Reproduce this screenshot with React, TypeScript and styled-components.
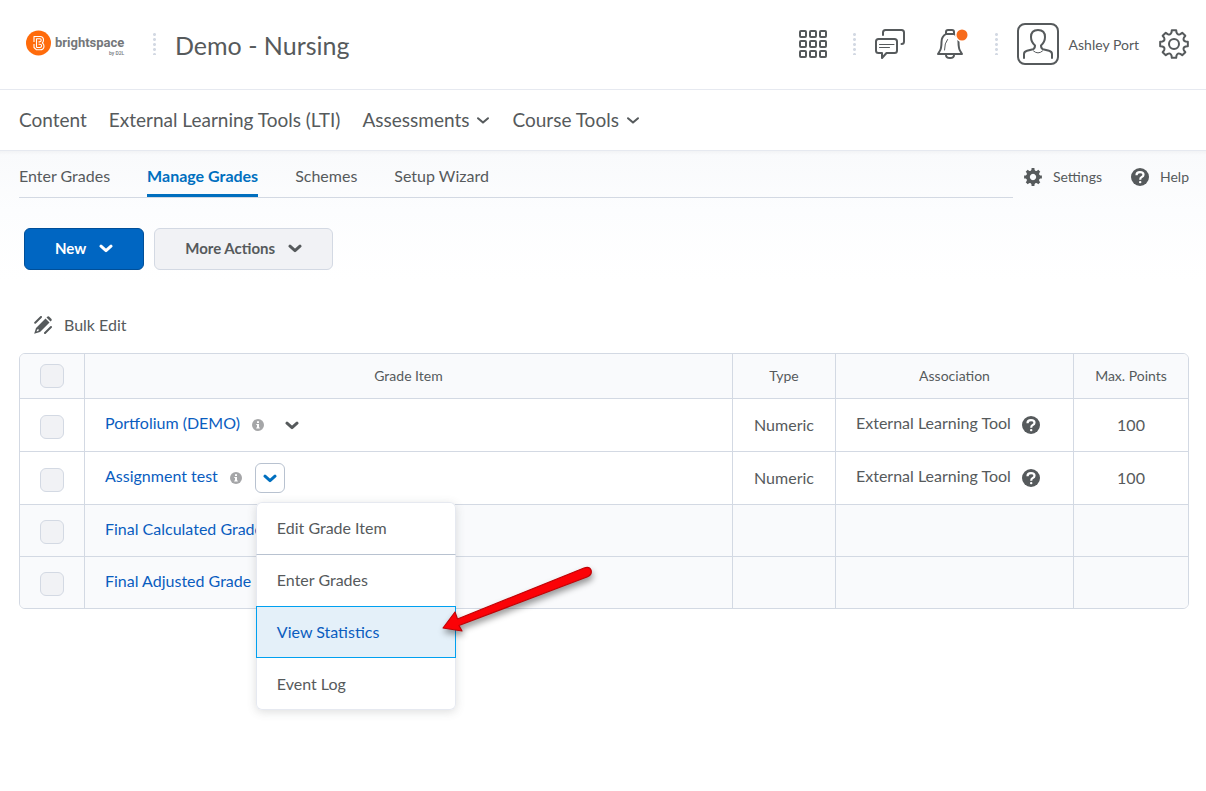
import React from "react";
import styled, { createGlobalStyle } from "styled-components";

const ink = "#565a5c";
const blue = "#006fbf";
const link = "#0a5dbf";
const line = "#d3d9e3";

const GlobalStyle = createGlobalStyle`
  *, *::before, *::after { box-sizing: border-box; }
  body {
    margin: 0;
    background: #fff;
    color: ${ink};
    font-family: Lato, "Liberation Sans", sans-serif;
    font-size: 16px;
    line-height: 20px;
  }
  button { font: inherit; color: inherit; cursor: pointer; }
  a { color: inherit; text-decoration: none; }
  svg { display: block; flex: none; }
`;

const Page = styled.div`
  min-height: 100vh;
`;
const Header = styled.header`
  display: flex;
  align-items: center;
  height: 90px;
  padding: 0 17px 2px 26px;
  border-bottom: 1px solid #e6e9f0;
`;
const Logo = styled.a`
  display: flex;
  margin-right: 25px;
`;
const Dots = styled.span`
  width: 3px;
  height: 23px;
  flex: none;
  background: radial-gradient(circle, #d3d9e3 1px, transparent 2px) 0 0 / 3px 5px;
`;
const CourseTitle = styled.h1`
  margin: 0 auto 0 19px;
  padding-top: 2px;
  font-size: 25px;
  line-height: 32px;
  font-weight: 400;
  white-space: nowrap;
`;
const HeaderTools = styled.div`
  display: flex;
  align-items: center;
`;
const ToolGroup = styled.div<{ $gap: number }>`
  display: flex;
  align-items: center;
  gap: ${(p) => p.$gap}px;
  margin: 0 26px 0 0;
  ${Dots} + & { margin-left: 19px; }
`;
const IconButton = styled.button`
  display: flex;
  padding: 0;
  border: 0;
  background: none;
`;
const Profile = styled.button`
  display: flex;
  align-items: center;
  gap: 10px;
  margin: 0 20px 0 19px;
  padding: 0;
  border: 0;
  background: none;
  font-size: 14px;
  white-space: nowrap;
`;
const ProfileName = styled.span`
  padding-top: 2px;
`;
const Avatar = styled.span`
  display: flex;
  justify-content: center;
  align-items: center;
  width: 42px;
  height: 42px;
  border: 2px solid ${ink};
  border-radius: 8px;
`;
const NavBar = styled.nav`
  display: flex;
  align-items: center;
  gap: 22px;
  height: 60px;
  padding: 0 19px;
  font-size: 19px;
  line-height: 24px;
`;
const NavItem = styled.a`
  display: flex;
  align-items: center;
  gap: 7px;
  white-space: nowrap;
`;
const Main = styled.main`
  padding: 0 17px 80px 19px;
  border-top: 1px solid #e6e9f0;
  background: linear-gradient(#f2f3f5 0, #f9fafc 4px, #fcfdfe 60px, #fff 130px);
`;
const TabRow = styled.div`
  display: flex;
  justify-content: space-between;
  gap: 11px;
`;
const Tabs = styled.nav`
  display: flex;
  flex: 1;
  gap: 37px;
  height: 47px;
  border-bottom: 1px solid ${line};
`;
const Tab = styled.a<{ $active?: boolean }>`
  display: block;
  height: 46px;
  padding-top: 15px;
  white-space: nowrap;
  border-bottom: 3px solid ${(p) => (p.$active ? blue : "transparent")};
  color: ${(p) => (p.$active ? blue : ink)};
  font-weight: ${(p) => (p.$active ? 700 : 400)};
`;
const Utilities = styled.div`
  display: flex;
  align-items: flex-start;
  gap: 29px;
  padding-top: 16px;
`;
const Utility = styled.a`
  display: flex;
  align-items: center;
  gap: 11px;
  font-size: 14px;
`;
const Actions = styled.div`
  display: flex;
  gap: 10px;
  padding: 30px 5px 0;
`;
const ActionButton = styled.button<{ $primary?: boolean }>`
  display: flex;
  align-items: center;
  gap: 13px;
  height: 42px;
  padding: 0 30px 2px;
  border: 1px solid ${(p) => (p.$primary ? "#004f99" : line)};
  border-radius: 6px;
  background: ${(p) => (p.$primary ? "#0066c2" : "#f1f2f5")};
  color: ${(p) => (p.$primary ? "#fff" : ink)};
  font-size: 15px;
  font-weight: 700;
`;
const BulkEdit = styled.button`
  display: flex;
  align-items: center;
  gap: 12px;
  margin: 45px 0 18px 15px;
  padding: 0;
  border: 0;
  background: none;
`;
const GradeTable = styled.table`
  width: 100%;
  table-layout: fixed;
  border-collapse: separate;
  border-spacing: 0;
  border: 1px solid ${line};
  border-radius: 6px;
`;
const Row = styled.tr<{ $tall?: boolean; $tint?: boolean }>`
  height: ${(p) => (p.$tall ? 53 : 52)}px;
  background: ${(p) => (p.$tint ? "#f9fafc" : "#fff")};
`;
const HeadRow = styled(Row)`
  height: 44px;
`;
const Check = styled.input`
  appearance: none;
  display: block;
  width: 24px;
  height: 24px;
  margin: 0 auto;
  border: 1px solid ${line};
  border-radius: 6px;
  background: #f1f2f5;
`;
const Cell = styled.td<{ $left?: boolean }>`
  padding: 0 ${(p) => (p.$left ? 20 : 0)}px;
  text-align: ${(p) => (p.$left ? "left" : "center")};
  border-left: 1px solid ${line};
  border-top: 1px solid ${line};
  vertical-align: middle;
  &:first-child { border-left: 0; }
  tr:last-child &:first-child { border-bottom-left-radius: 5px; }
  tr:last-child &:last-child { border-bottom-right-radius: 5px; }
  ${Check} { margin-top: 3px; }
`;
const HeadCell = styled.th`
  padding: 0;
  font-size: 14px;
  font-weight: 400;
  border-left: 1px solid ${line};
  &:first-child { border-left: 0; border-top-left-radius: 5px; }
  &:last-child { border-top-right-radius: 5px; }
`;
const Line = styled.div`
  display: flex;
  align-items: center;
  white-space: nowrap;
`;
const ItemLink = styled.a`
  color: ${link};
  margin: 0 12px 4px 0;
`;
const Association = styled.span`
  margin: 0 11px 4px 0;
`;
const MenuAnchor = styled.div`
  position: relative;
  margin-left: 13px;
`;
const MenuToggle = styled.button<{ $open?: boolean }>`
  display: flex;
  align-items: center;
  justify-content: center;
  width: 30px;
  height: 30px;
  padding: 0;
  border: 1px solid ${(p) => (p.$open ? "#b8c2d0" : "transparent")};
  border-radius: 6px;
  background: none;
  color: ${(p) => (p.$open ? blue : ink)};
`;
const Menu = styled.div`
  position: absolute;
  z-index: 1;
  top: 39px;
  left: 1px;
  width: 200px;
  border-radius: 6px;
  background: #fff;
  box-shadow: inset 0 0 0 1px #e6e9f0, 0 2px 10px rgba(86, 90, 92, 0.2);
`;
const MenuItem = styled.button<{ $active?: boolean; $ruled?: boolean }>`
  display: block;
  width: 100%;
  height: 52px;
  padding: 0 20px;
  text-align: left;
  border: 1px solid ${(p) => (p.$active ? "#00a0f0" : "transparent")};
  ${(p) => (p.$ruled ? "border-top-color: #b8c2d0;" : "")}
  background: ${(p) => (p.$active ? "#e4f0f9" : "none")};
  color: ${(p) => (p.$active ? link : ink)};
`;
const Pointer = styled.svg`
  position: absolute;
  z-index: 2;
  top: 98px;
  left: 182px;
  pointer-events: none;
  overflow: visible;
`;

const Chevron = ({ width = 3 }: { width?: number }) => (
  <svg width="14" height="9" viewBox="0 0 14 9" fill="none" stroke="currentColor" strokeWidth={width} strokeLinecap="round" strokeLinejoin="round">
    <path d="M2 2.2 L7 6.6 L12 2.2" />
  </svg>
);

const BrandMark = () => (
  <svg width="102" height="28" viewBox="0 0 102 28">
    <circle cx="12.5" cy="13" r="12.5" fill="#ff6b0b" />
    <g fill="none" stroke="#fff" strokeWidth="1.1" strokeLinejoin="round">
      <path d="M8 12 V6.5 H14 Q17.500 6.5 17.500 10 Q17.500 12 16.300 13 Q18 14 18 16.200 Q18 19.800 14 19.800 H10.500 L8 17.500 V14" />
      <path d="M10.500 17.500 V8.800 H14 Q15.200 8.800 15.200 10.300 Q15.200 11.900 13.700 11.900 H12.500 M12.500 14.200 H14 Q15.600 14.200 15.600 15.800 Q15.600 17.500 14 17.500 H10.500" />
    </g>
    <text x="29" y="17" fontFamily="Roboto, sans-serif" fontSize="13" fontWeight="700" fill="#74777a">brightspace</text>
    <text x="83" y="25" fontFamily="Roboto, sans-serif" fontSize="5" fontWeight="500" fill="#74777a">by D2L</text>
  </svg>
);

const WaffleIcon = () => (
  <svg width="28" height="28" viewBox="0 0 28 28" fill="none" stroke={ink} strokeWidth="2">
    {[1, 11, 21].map((y) => [1, 11, 21].map((x) => <rect key={`${x}-${y}`} x={x} y={y} width="6" height="6" rx="1" />))}
  </svg>
);

const ChatIcon = () => (
  <svg width="30" height="30" viewBox="0 0 30 30" fill="none" stroke={ink} strokeWidth="2" strokeLinecap="round" strokeLinejoin="round">
    <path d="M8 6 V3.500 Q8 1 10.500 1 H26.500 Q29 1 29 3.500 V12.500 Q29 15 26.500 15" />
    <path d="M3.500 10 H19.500 Q22 10 22 12.500 V21.500 Q22 24 19.500 24 H11.500 L7 29 V24 H3.500 Q1 24 1 21.500 V12.500 Q1 10 3.500 10 Z" />
    <path d="M4.500 15.500 H19 M4.500 18.500 H14.500" strokeWidth="1" />
  </svg>
);

const BellIcon = () => (
  <svg width="32" height="30" viewBox="0 0 32 30" fill="none" stroke={ink} strokeWidth="2" strokeLinecap="round" strokeLinejoin="round">
    <path d="M9 5 V3 Q9 1 11 1 H15 Q17 1 17 3 V5" />
    <path d="M9 5 H17 Q21.500 7.500 21.500 13 Q21.500 20 23.500 22.500 L25 25 H1 L2.500 22.500 Q4.500 20 4.500 13 Q4.500 7.500 9 5 Z" />
    <path d="M9 26 Q9 29 13 29 Q17 29 17 26" />
    <path d="M10.500 10.500 Q7.500 14 7.500 21" strokeWidth="1" />
    <circle cx="25" cy="6" r="7" fill="#fff" stroke="none" />
    <circle cx="25" cy="6" r="5.500" fill="#f76b1c" stroke="none" />
  </svg>
);

const PersonIcon = () => (
  <svg width="30" height="30" viewBox="0 0 30 30" fill="none" stroke={ink} strokeWidth="2" strokeLinecap="round" strokeLinejoin="round">
    <path d="M1 29 V25 Q1 22.500 4 21.700 L10 20.200 Q12 19.500 12 16.500 Q8 13 8 8 Q8 1 15 1 Q22 1 22 8 Q22 13 18 16.500 Q18 19.500 20 20.200 L26 21.700 Q29 22.500 29 25 V29" />
    <path d="M10.500 22 Q15 26 19.500 22" strokeWidth="1" />
  </svg>
);

const gear = (outer: number, inner: number, dip: number, c: number) => {
  const step = Math.PI / 4;
  const at = (tooth: number, f: number, r: number) => {
    const a = (tooth + f) * step - Math.PI / 2;
    return `${(c + Math.cos(a) * r).toFixed(2)} ${(c + Math.sin(a) * r).toFixed(2)}`;
  };
  let d = "";
  for (let i = 0; i < 8; i++) {
    d += `${i ? "L" : "M"}${at(i, -0.2, outer)} L${at(i, 0.2, outer)} L${at(i, 0.27, inner)} Q${at(i, 0.5, dip)} ${at(i, 0.73, inner)} `;
  }
  return `${d}Z`;
};

const GearOutline = () => (
  <svg width="30" height="30" viewBox="0 0 30 30" fill="none" stroke={ink} strokeWidth="2" strokeLinejoin="round">
    <path d={gear(14, 11.8, 9.3, 15)} />
    <circle cx="15" cy="15" r="5" />
  </svg>
);

const GearSolid = () => (
  <svg width="18" height="18" viewBox="0 0 18 18" fill={ink} fillRule="evenodd">
    <path d={`${gear(9, 7.4, 6, 9)} M9 5.800 a3.200 3.200 0 1 0 0.010 0 Z`} />
  </svg>
);

const HelpIcon = () => (
  <svg width="18" height="18" viewBox="0 0 18 18">
    <circle cx="9" cy="9" r="9" fill={ink} />
    <path d="M5.500 7.200 Q5.500 4.200 9 4.200 Q12.500 4.200 12.500 6.700 Q12.500 8.200 10.700 9 Q9.200 9.700 9.200 11.700" fill="none" stroke="#fff" strokeWidth="2.200" />
    <rect x="8" y="13" width="2.400" height="2.200" rx="1" fill="#fff" />
  </svg>
);

const InfoIcon = () => (
  <svg width="12" height="12" viewBox="0 0 12 12">
    <circle cx="6" cy="6" r="6" fill="#a5a6a8" />
    <path d="M5 2.200 H7 V4 H5 Z M4.300 5 H7 V8.500 H7.800 V9.600 H4.200 V8.500 H5 V6 H4.300 Z" fill="#fff" />
  </svg>
);

const BulkEditIcon = () => (
  <svg width="18" height="18" viewBox="0 0 18 18" fill={ink}>
    <path d="M0.200 17.800 L2 12 L11.500 2.500 L15.500 6.500 L6 16 Z M3 14 L2.600 15.400 L4 15 L5 14 L4 13 Z" fillRule="evenodd" />
    <path d="M12.500 1.500 L13.600 0.400 Q14.300 0 15 0.500 L17.500 3 Q18 3.700 17.600 4.400 L16.500 5.500 Z" />
    <path d="M1.200 6.800 L7 1 M11 17 L17 11" fill="none" stroke={ink} strokeWidth="2" strokeLinecap="round" />
  </svg>
);

const ArrowPointer = () => (
  <Pointer width="160" height="76" viewBox="0 0 160 76">
    <path
      d="M6 67 L18 51 L20.500 58 L147 7 Q152.500 5 154 9 Q155.500 13.500 150 16 L22 64.500 L25 70 Z"
      fill="#fb0207"
      stroke="#c00306"
      strokeWidth="1.200"
      strokeLinejoin="round"
      filter="drop-shadow(1px 4px 3px rgba(0,0,0,0.4))"
    />
  </Pointer>
);

type Grade = { name: string; info?: boolean; open?: boolean; type?: string; association?: string; points?: string };
const grades: Grade[] = [
  { name: "Portfolium (DEMO)", info: true, type: "Numeric", association: "External Learning Tool", points: "100" },
  { name: "Assignment test", info: true, open: true, type: "Numeric", association: "External Learning Tool", points: "100" },
  { name: "Final Calculated Grade" },
  { name: "Final Adjusted Grade" },
];

export default function App() {
  return (
    <Page>
      <GlobalStyle />
      <Header>
        <Logo href="#" aria-label="Brightspace by D2L"><BrandMark /></Logo>
        <Dots />
        <CourseTitle>Demo - Nursing</CourseTitle>
        <HeaderTools>
          <ToolGroup $gap={0}>
            <IconButton aria-label="Course selector"><WaffleIcon /></IconButton>
          </ToolGroup>
          <Dots />
          <ToolGroup $gap={32}>
            <IconButton aria-label="Messages"><ChatIcon /></IconButton>
            <IconButton aria-label="Notifications"><BellIcon /></IconButton>
          </ToolGroup>
          <Dots />
          <Profile>
            <Avatar><PersonIcon /></Avatar>
            <ProfileName>Ashley Port</ProfileName>
          </Profile>
          <IconButton aria-label="Admin tools"><GearOutline /></IconButton>
        </HeaderTools>
      </Header>
      <NavBar aria-label="Course">
        <NavItem href="#">Content</NavItem>
        <NavItem href="#">External Learning Tools (LTI)</NavItem>
        <NavItem href="#">Assessments <Chevron width={2} /></NavItem>
        <NavItem href="#">Course Tools <Chevron width={2} /></NavItem>
      </NavBar>
      <Main>
        <TabRow>
          <Tabs aria-label="Grades">
            <Tab href="#">Enter Grades</Tab>
            <Tab href="#" $active>Manage Grades</Tab>
            <Tab href="#">Schemes</Tab>
            <Tab href="#">Setup Wizard</Tab>
          </Tabs>
          <Utilities>
            <Utility href="#"><GearSolid />Settings</Utility>
            <Utility href="#"><HelpIcon />Help</Utility>
          </Utilities>
        </TabRow>
        <Actions>
          <ActionButton $primary>New <Chevron /></ActionButton>
          <ActionButton>More Actions <Chevron /></ActionButton>
        </Actions>
        <BulkEdit><BulkEditIcon />Bulk Edit</BulkEdit>
        <GradeTable>
          <colgroup>
            <col width="64" />
            <col />
            <col width="103" />
            <col width="238" />
            <col width="115" />
          </colgroup>
          <thead>
            <HeadRow $tint>
              <HeadCell><Check type="checkbox" aria-label="Select all rows" /></HeadCell>
              <HeadCell>Grade Item</HeadCell>
              <HeadCell>Type</HeadCell>
              <HeadCell>Association</HeadCell>
              <HeadCell>Max. Points</HeadCell>
            </HeadRow>
          </thead>
          <tbody>
            {grades.map((g) => (
              <Row key={g.name} $tall={g.info} $tint={!g.info}>
                <Cell><Check type="checkbox" aria-label={`Select ${g.name}`} /></Cell>
                <Cell $left>
                  <Line>
                    <ItemLink href="#">{g.name}</ItemLink>
                    {g.info && (
                      <>
                        <InfoIcon />
                        <MenuAnchor>
                          <MenuToggle $open={g.open} aria-label={`Actions for ${g.name}`}><Chevron /></MenuToggle>
                          {g.open && (
                            <>
                              <Menu>
                                <MenuItem>Edit Grade Item</MenuItem>
                                <MenuItem $ruled>Enter Grades</MenuItem>
                                <MenuItem $active>View Statistics</MenuItem>
                                <MenuItem>Event Log</MenuItem>
                              </Menu>
                              <ArrowPointer />
                            </>
                          )}
                        </MenuAnchor>
                      </>
                    )}
                  </Line>
                </Cell>
                <Cell>{g.type}</Cell>
                <Cell $left>
                  {g.association && <Line><Association>{g.association}</Association><HelpIcon /></Line>}
                </Cell>
                <Cell>{g.points}</Cell>
              </Row>
            ))}
          </tbody>
        </GradeTable>
      </Main>
    </Page>
  );
}
